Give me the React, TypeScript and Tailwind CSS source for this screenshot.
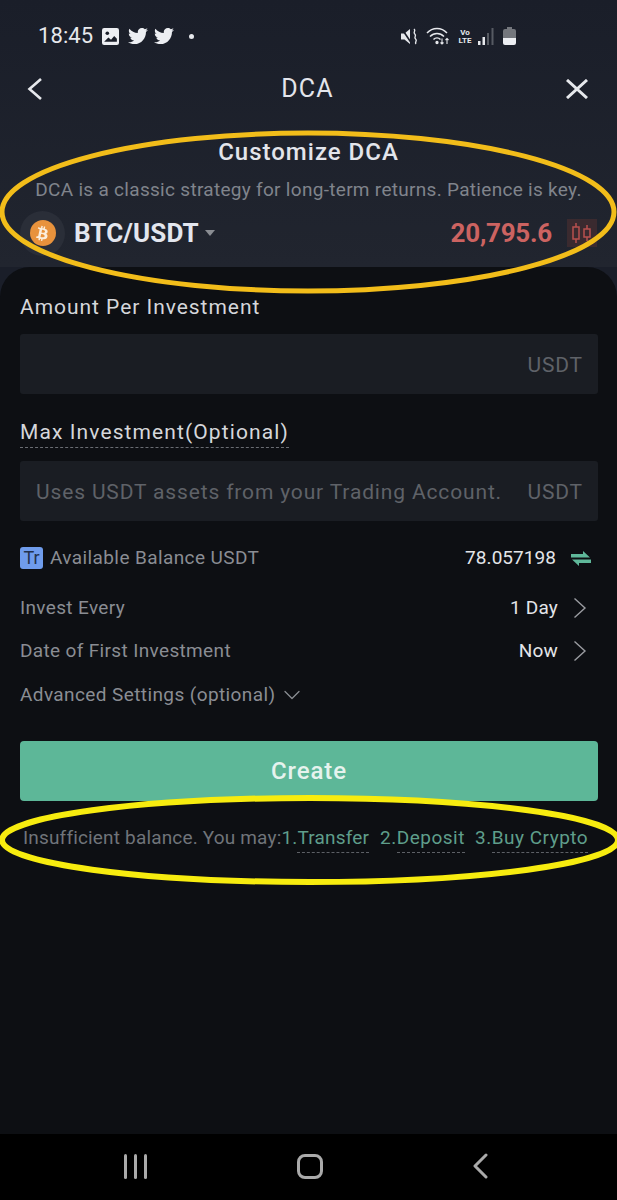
import { ChevronDown } from "lucide-react";
import { FaTwitter, FaBtc } from "react-icons/fa";

const font = { fontFamily: "Roboto, sans-serif" };

const StatusBar = () => (
    <div className="flex h-[24px] items-center justify-between pl-[38px] pr-[101px]">
        <div className="flex items-center">
            <span className="text-[22px] leading-none tracking-[0.1px] text-[#e6e8ec]">18:45</span>
            <svg className="ml-[9px]" width="17" height="17" viewBox="0 0 16 16">
                <rect width="16" height="16" rx="2" fill="#eceef2" />
                <circle cx="5" cy="5" r="1.7" fill="#1a1e29" />
                <path d="M2 13l4-4 2.500 2 3-3.500L14 10v3z" fill="#1a1e29" />
            </svg>
            <FaTwitter className="ml-[9px] text-[#eceef2]" size={20} />
            <FaTwitter className="ml-[6px] text-[#eceef2]" size={20} />
            <div className="ml-[15px] h-[5px] w-[5px] rounded-full bg-[#e6e8ec]" />
        </div>
        <div className="flex items-center">
            <svg width="17" height="17" viewBox="0 0 17 17" fill="none">
                <path d="M0 5.500h3.500L9 1v15l-5.500-4.500H0z" fill="#e6e8ec" />
                <path d="M1 1l10 15" stroke="#1a1e29" strokeWidth="1.6" />
                <path d="M13 1c2.500 2-1.500 3 .8 5s-1.500 3 .8 5-1.500 3 .4 5" stroke="#e6e8ec" strokeWidth="1.4" />
            </svg>
            <svg className="ml-[8px]" width="24" height="18" viewBox="0 0 24 18" fill="none" stroke="#e6e8ec" strokeWidth="1.5">
                <path d="M1 6c5.500-6 14.500-6 20 0" />
                <path d="M4 9.500c4-4 10-4 14 0" />
                <path d="M7.500 12.500c2-2 5-2 7 0" />
                <circle cx="11" cy="15.500" r="0.9" fill="#e6e8ec" />
                <path d="M16 11.500v5.500m-1.500-1.500L16 17l1.500-1.500M21 17v-5.500m-1.500 1.500L21 11.500l1.500 1.500" strokeWidth="1.1" />
            </svg>
            <div className="ml-[7px] mt-[2px] flex w-[16px] flex-col items-center text-[8px] font-bold leading-[8px] text-[#e6e8ec]">
                <span>Vo</span>
                <span>LTE</span>
            </div>
            <svg className="ml-[5px]" width="16" height="17" viewBox="0 0 16 17">
                <rect x="0" y="13" width="2.500" height="4" fill="#e6e8ec" />
                <rect x="4.500" y="9" width="2.500" height="8" fill="#e6e8ec" />
                <rect x="9" y="5" width="2" height="12" fill="#565a62" />
                <rect x="13.500" y="0" width="2" height="17" fill="#565a62" />
            </svg>
            <svg className="ml-[9px]" width="13" height="18" viewBox="0 0 13 18">
                <path d="M4 0h5v2h2a2 2 0 0 1 2 2v7H0V4a2 2 0 0 1 2-2h2z" fill="#74777d" />
                <path d="M0 11h13v5a2 2 0 0 1-2 2H2a2 2 0 0 1-2-2z" fill="#eceef2" />
            </svg>
        </div>
    </div>
);

const Chevron = () => (
    <svg className="ml-[15px] mr-[11px]" width="14" height="22" viewBox="0 0 14 22" fill="none" stroke="#9a9ca1" strokeWidth="1.4">
        <path d="M1.500 1.500L12 11 1.500 20.500" />
    </svg>
);

const Row = ({ label, value }: { label: string; value: string }) => (
    <div className="flex h-[24px] items-center justify-between">
        <span className="text-[19px] tracking-[0.35px] text-[#8a8d93]">{label}</span>
        <div className="flex items-center">
            <span className="text-[19px] tracking-[0.2px] text-[#e3e5e9]">{value}</span>
            <Chevron />
        </div>
    </div>
);

const Field = ({ placeholder }: { placeholder?: string }) => (
    <div className="mt-[13px] flex h-[60px] items-center justify-between rounded-[3px] bg-[#1a1d23] pl-[16px] pr-[15px] pt-[3px] text-[21px] tracking-[0.85px] text-[#5f6268]">
        <span>{placeholder}</span>
        <span>USDT</span>
    </div>
);

const Link = ({ children, num }: { children: string; num: string }) => (
    <span className="text-[#5f9e8b]">
        {num}
        <span className="border-b border-dashed border-[#5d6066] pb-[3px]">{children}</span>
    </span>
);

export default function App() {
    return (
        <div className="relative flex h-[1200px] w-[617px] flex-col overflow-hidden bg-[#1a1e29]" style={font}>
            <div className="bg-gradient-to-b from-[#1a1e29] to-[#21252f]">
                <div className="pt-[24px]">
                    <StatusBar />
                </div>
                <div className="mt-[19px] grid h-[44px] grid-cols-3 items-center pl-[27px] pr-[29px]">
                    <svg width="16" height="24" viewBox="0 0 16 24" fill="none" stroke="#e6e8ec" strokeWidth="2.6">
                        <path d="M14 2L2.500 12 14 22" />
                    </svg>
                    <span className="text-center text-[25px] tracking-[1.2px] text-[#e3e5eb]">DCA</span>
                    <svg className="justify-self-end" width="22" height="20" viewBox="0 0 22 20" fill="none" stroke="#e6e8ec" strokeWidth="3">
                        <path d="M1 1l20 18M21 1L1 19" />
                    </svg>
                </div>
                <div className="mt-[25px] text-center text-[24px] font-medium leading-[32px] tracking-[1px] text-[#e3e5eb]">
                    Customize DCA
                </div>
                <div className="mt-[10px] whitespace-nowrap text-center text-[19px] leading-[24px] tracking-[0.3px] text-[#80848c]">
                    DCA is a classic strategy for long-term returns. Patience is key.
                </div>
                <div className="mt-[9px] flex h-[44px] items-center justify-between pl-[20px] pr-[20px]">
                    <div className="flex items-center">
                        <div className="flex h-[45px] w-[45px] items-center justify-center rounded-full bg-[#2a2e38]">
                            <div className="flex h-[26px] w-[26px] items-center justify-center rounded-full bg-[#e8923c]">
                                <FaBtc className="rotate-12 text-[#fbeedd]" size={15} />
                            </div>
                        </div>
                        <span className="ml-[9px] text-[26px] font-bold tracking-[0.1px] text-[#e3e6ee]">BTC/USDT</span>
                        <div className="ml-[6px] h-0 w-0 border-x-[5px] border-t-[6px] border-x-transparent border-t-[#8a8d93]" />
                    </div>
                    <div className="flex items-center">
                        <span className="text-[26px] font-bold tracking-[-0.25px] text-[#cc6361]">20,795.6</span>
                        <div className="ml-[15px] flex h-[28px] w-[30px] items-center justify-center bg-[#3a2a2f]">
                            <svg width="24" height="24" viewBox="0 0 24 24" fill="none" stroke="#b8504f" strokeWidth="1.5">
                                <rect x="3" y="6" width="6" height="12" />
                                <path d="M6 2v4M6 18v4" />
                                <rect x="14" y="8" width="6" height="8" />
                                <path d="M17 4v4M17 16v4" />
                            </svg>
                        </div>
                    </div>
                </div>
                <div className="h-[12px]" />
            </div>

            <div className="flex flex-1 flex-col rounded-t-[30px] bg-[#0d0f13] pl-[20px] pr-[19px] pt-[26px]">
                <div className="text-[21px] leading-[28px] tracking-[0.96px] text-[#d5d7db]">Amount Per Investment</div>
                <Field />
                <div className="mt-[24px] w-fit border-b border-dashed border-[#6a6d73] pb-[1px] text-[21px] leading-[28px] tracking-[1.1px] text-[#d5d7db]">
                    Max Investment(Optional)
                </div>
                <Field placeholder="Uses USDT assets from your Trading Account." />

                <div className="mt-[25px] flex h-[24px] items-center justify-between">
                    <div className="flex items-center">
                        <div className="flex h-[22px] w-[23px] items-center justify-center rounded-[3px] bg-[#6f9cec] text-[18px] leading-none text-[#23324d]">
                            Tr
                        </div>
                        <span className="ml-[7px] text-[19px] tracking-[0.4px] text-[#8a8d93]">Available Balance USDT</span>
                    </div>
                    <div className="flex items-center">
                        <span className="text-[19px] tracking-[0.05px] text-[#e3e5e9]">78.057198</span>
                        <svg className="ml-[15px] mr-[7px]" width="20" height="15" viewBox="0 0 20 15" fill="#5fb89a">
                            <path d="M0 6.500h19L12 0v3H0zM20 8.500H1L8 15v-3h12z" />
                        </svg>
                    </div>
                </div>
                <div className="mt-[26px]">
                    <Row label="Invest Every" value="1 Day" />
                </div>
                <div className="mt-[19px]">
                    <Row label="Date of First Investment" value="Now" />
                </div>
                <div className="mt-[20px] flex h-[24px] items-center text-[19px] tracking-[0.4px] text-[#8a8d93]">
                    Advanced Settings (optional)
                    <ChevronDown className="ml-[3px]" size={28} strokeWidth={1.1} />
                </div>
                <div className="mt-[34px] flex h-[60px] items-center justify-center rounded-[4px] bg-[#5db798] text-[24px] font-medium tracking-[0.9px] text-[#e6f3ee]">
                    Create
                </div>
                <div className="mt-[25px] flex gap-[11px] whitespace-nowrap pl-[3px] text-[19px] leading-[24px] tracking-[0.17px] text-[#70747a]">
                    <span>
                        Insufficient balance. You may:
                        <Link num="1.">Transfer</Link>
                    </span>
                    <span className="flex gap-[10px] tracking-[0.5px]">
                        <Link num="2.">Deposit</Link>
                        <Link num="3.">Buy Crypto</Link>
                    </span>
                </div>
            </div>

            <div className="flex h-[66px] items-center justify-between bg-black pb-[2px] pl-[124px] pr-[129px]">
                <div className="flex gap-[7px]">
                    <div className="h-[25px] w-[3px] rounded-full bg-[#aaa]" />
                    <div className="h-[25px] w-[3px] rounded-full bg-[#aaa]" />
                    <div className="h-[25px] w-[3px] rounded-full bg-[#aaa]" />
                </div>
                <div className="h-[25px] w-[26px] rounded-[8px] border-[3px] border-[#aaa]" />
                <svg width="16" height="26" viewBox="0 0 16 26" fill="none" stroke="#aaa" strokeWidth="3" strokeLinecap="round" strokeLinejoin="round">
                    <path d="M14 2L3 13l11 11" />
                </svg>
            </div>

            {/* hand drawn highlight rings on top of the screenshot */}
            <svg className="pointer-events-none absolute left-0 top-0" width="617" height="1200" fill="none">
                <ellipse cx="308" cy="212" rx="306" ry="79" stroke="#f2bd1a" strokeWidth="5" />
                <ellipse cx="310" cy="840" rx="308" ry="42" stroke="#f7ec0f" strokeWidth="6" />
            </svg>
        </div>
    );
}
